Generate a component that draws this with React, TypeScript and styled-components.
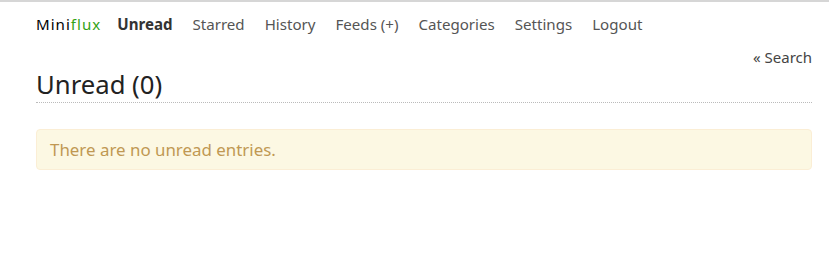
import React from "react";
import styled, { createGlobalStyle } from "styled-components";

const GlobalStyle = createGlobalStyle`
  html, body {
    margin: 0;
    padding: 0;
    background: #fff;
  }
  body {
    font-family: "Noto Sans", "Open Sans", sans-serif;
    color: #333;
    border-top: 2px solid #d6d6d6;
  }
`;

const Page = styled.div`
  padding: 0 17px 0 36px;
`;

const Header = styled.header`
  padding-top: 12px;
`;

const NavList = styled.ul`
  display: flex;
  align-items: baseline;
  list-style: none;
  margin: 0;
  padding: 0;
  font-size: 15.1px;
  line-height: 20px;
`;

const NavItem = styled.li<{ $active?: boolean }>`
  padding-right: 20px;
  font-weight: ${({ $active }) => ($active ? 700 : 400)};
  color: ${({ $active }) => ($active ? "#333" : "#555")};
`;

const Logo = styled.li`
  padding-right: 16px;
  color: #000;
  letter-spacing: 1px;

  span {
    color: #33a317;
  }
`;

const SearchRow = styled.div`
  display: flex;
  justify-content: flex-end;
  margin-top: 13px;
  font-size: 15px;
  line-height: 20px;
  color: #444;
`;

const PageHeader = styled.div`
  margin-bottom: 26px;
`;

const Title = styled.h1`
  margin: 0;
  font-size: 25.7px;
  font-weight: 400;
  line-height: 35px;
  color: #222;
  border-bottom: 1px dotted #bbb;
`;

const Alert = styled.div`
  padding: 10px 35px 10px 13px;
  color: #c09853;
  background-color: #fcf8e3;
  border: 1px solid #fbeed5;
  border-radius: 4px;
  font-size: 16.9px;
  line-height: 19px;
`;

const navItems = ["Starred", "History", "Feeds (+)", "Categories", "Settings", "Logout"];

export default function App() {
  return (
    <>
      <GlobalStyle />
      <Page>
        <Header>
          <NavList>
            <Logo>
              Mini<span>flux</span>
            </Logo>
            <NavItem $active>Unread</NavItem>
            {navItems.map((item) => (
              <NavItem key={item}>{item}</NavItem>
            ))}
          </NavList>
        </Header>
        <SearchRow>« Search</SearchRow>
        <PageHeader>
          <Title>Unread (0)</Title>
        </PageHeader>
        <Alert>There are no unread entries.</Alert>
      </Page>
    </>
  );
}
